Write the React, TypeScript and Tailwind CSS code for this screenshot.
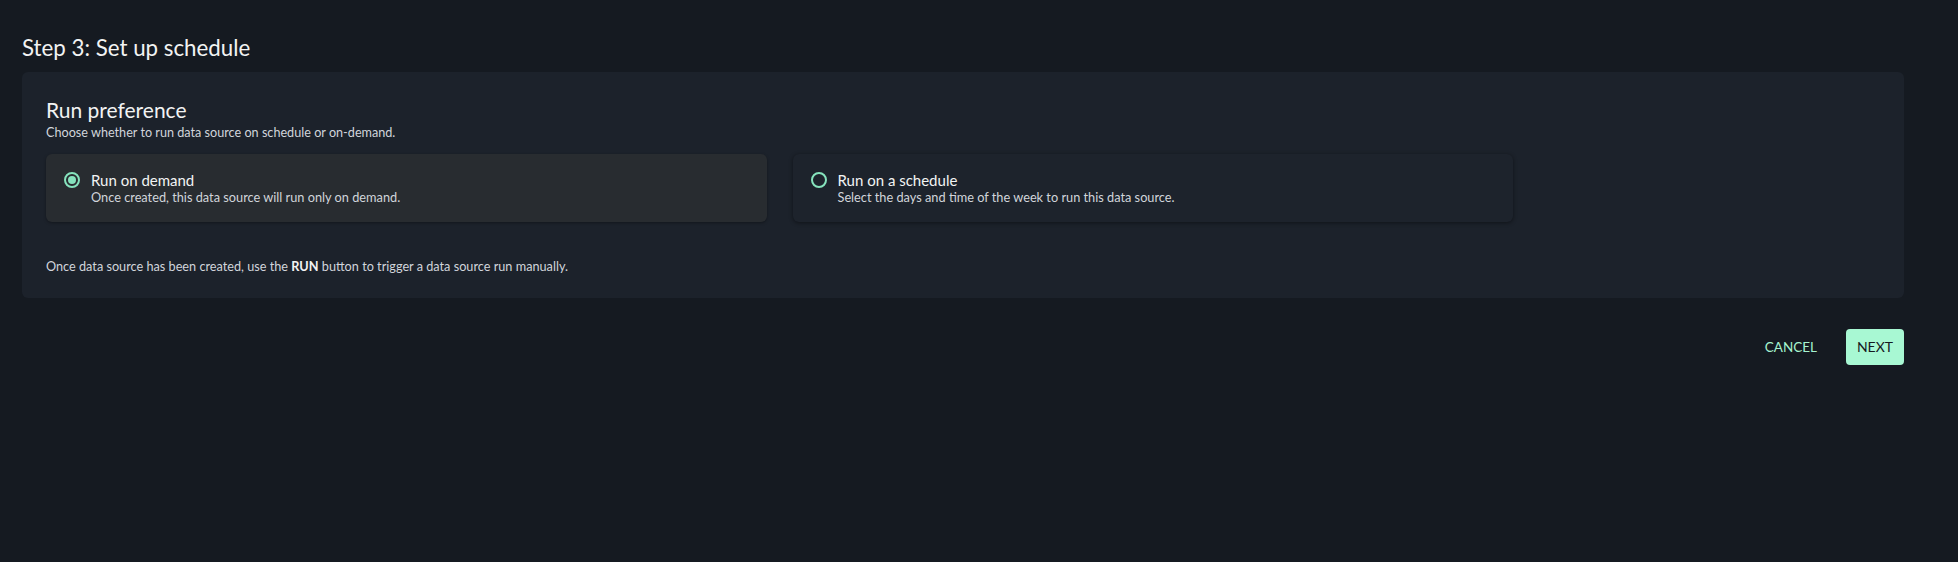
import { useState } from 'react';

type Option = {
  id: string;
  label: string;
  description: string;
};

const OPTIONS: Option[] = [
  { id: 'demand', label: 'Run on demand', description: 'Once created, this data source will run only on demand.' },
  { id: 'schedule', label: 'Run on a schedule', description: 'Select the days and time of the week to run this data source.' },
];

function Radio({ checked }: { checked: boolean }) {
  return (
    <span className="flex h-4 w-4 shrink-0 items-center justify-center rounded-full border-2 border-[#86e3bd]">
      {checked && <span className="h-2 w-2 rounded-full bg-[#86e3bd]" />}
    </span>
  );
}

export default function App() {
  const [pref, setPref] = useState('demand');

  return (
    <div className="min-h-screen bg-[#151a21] pl-[22px] pr-[54px] pt-[34px] font-['Lato',sans-serif] text-[#e9ebed]">
      <h1 className="text-[22.3px] leading-[28px] text-[#f2f3f3]">Step 3: Set up schedule</h1>

      <section className="mt-[10px] rounded-md bg-[#1c222b] px-[24px] pt-[24px] pb-[23px]">
        <h2 className="text-[21px] leading-[28px] text-[#f2f3f3]">Run preference</h2>
        <p className="text-[12.65px] leading-[17px] text-[#d1d5db]">
          Choose whether to run data source on schedule or on-demand.
        </p>

        <div className="mt-[13px] grid w-[1467px] grid-cols-2 gap-[26px]">
          {OPTIONS.map((opt) => {
            const checked = pref === opt.id;
            return (
              <button
                key={opt.id}
                type="button"
                onClick={() => setPref(opt.id)}
                className={
                  checked
                    ? 'flex h-[68px] items-start gap-[11px] rounded-md bg-[#282c30] pl-[18px] pt-[18px] text-left shadow-[0_1px_3px_rgba(0,0,0,0.35)]'
                    : 'flex h-[68px] items-start gap-[11px] rounded-md bg-[#1d232c] pl-[18px] pt-[18px] text-left shadow-[0_1px_4px_rgba(0,0,0,0.45)]'
                }
              >
                <Radio checked={checked} />
                <span className="flex flex-col">
                  <span className="text-[15px] leading-[17px] text-[#f2f3f3]">{opt.label}</span>
                  <span className="text-[12.75px] leading-[17px] text-[#d1d5db]">{opt.description}</span>
                </span>
              </button>
            );
          })}
        </div>

        <p className="mt-[36px] text-[12.7px] leading-[17px] text-[#d1d5db]">
          Once data source has been created, use the <b className="font-bold text-[#f2f3f3]">RUN</b> button to trigger a data source run manually.
        </p>
      </section>

      <div className="mt-[31px] flex items-center justify-end gap-[16px]">
        <button type="button" className="px-[13px] text-[13.5px] leading-[20px] text-[#a6f3cf]">
          CANCEL
        </button>
        <button
          type="button"
          className="h-[36px] w-[58px] rounded-[4px] bg-[#a8f8d3] text-[14px] leading-[20px] text-[#16191f]"
        >
          NEXT
        </button>
      </div>
    </div>
  );
}
